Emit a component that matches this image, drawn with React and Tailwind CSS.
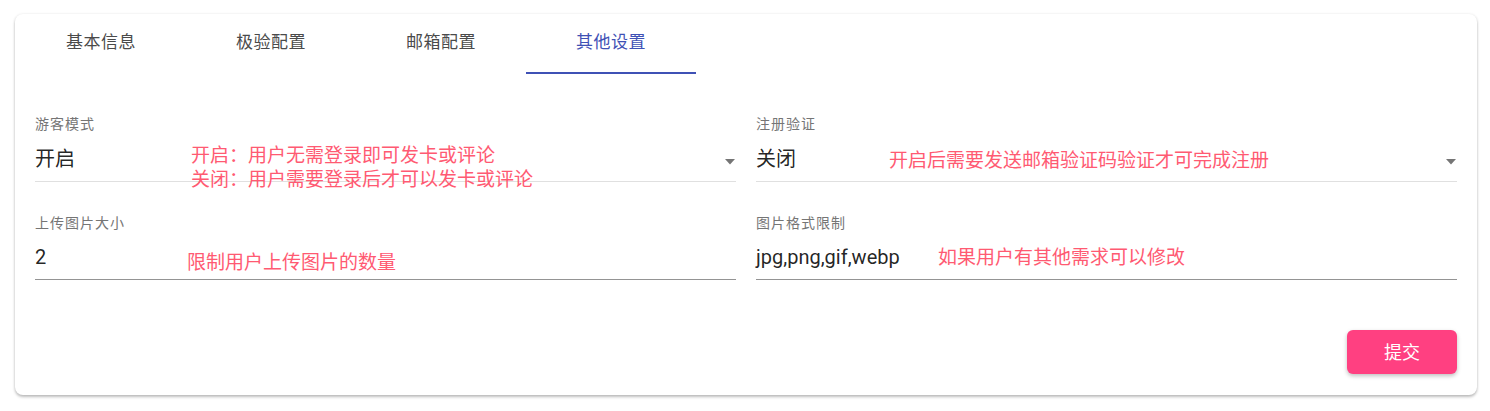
import React, { useState } from 'react'

const TABS = ['基本信息', '极验配置', '邮箱配置', '其他设置']

const FONT = { fontFamily: 'Roboto, "Noto Sans CJK SC", sans-serif' }

function Caret() {
  return (
    <svg className="absolute right-px top-[28px]" width="10" height="6" viewBox="0 0 10 6">
      <polygon points="0,0 10,0 5,5.5" fill="#757575" />
    </svg>
  )
}

function Field({ label, value, select, hint, hintTop, hintLeft, rowPt, line }) {
  return (
    <div className="flex flex-col">
      <p className="text-[14px] leading-[14px] tracking-[1px] text-[#757575]">{label}</p>
      <div
        className={`relative pb-[10px] border-b ${line}`}
        style={{ paddingTop: rowPt }}
      >
        <p className="text-[20px] leading-[24px] text-[#000000de]">{value}</p>
        {select && <Caret />}
        <div
          className="absolute text-[19px] leading-[24px] text-[#ff5a72] whitespace-nowrap"
          style={{ top: hintTop, left: hintLeft }}
        >
          {hint.map((h) => (
            <p key={h}>{h}</p>
          ))}
        </div>
      </div>
    </div>
  )
}

export default function App() {
  const [tab, setTab] = useState(3)

  return (
    <div className="min-h-[411px] bg-white pt-[14px] pl-[15px]" style={FONT}>
      <div className="w-[1462px] h-[381px] rounded-lg bg-white shadow-[0_2px_3px_rgba(0,0,0,0.25),0_0_3px_rgba(0,0,0,0.08)] flex flex-col">
        {/* Tabs */}
        <div className="flex h-[60px] pl-px">
          {TABS.map((t, i) => (
            <button
              key={t}
              onClick={() => setTab(i)}
              className={`w-[170px] h-full flex items-center justify-center text-[17px] tracking-[0.5px] border-b-2 ${
                i === tab ? 'text-[#3f51b5] border-[#3f51b5]' : 'text-[#4a4a4a] border-transparent'
              }`}
            >
              {t}
            </button>
          ))}
        </div>

        {/* Form */}
        <div className="px-[20px] pt-[43px] grid grid-cols-2 gap-x-[20px]">
          <Field
            label="游客模式"
            value="开启"
            select
            rowPt="16px"
            line="border-[#e0e0e0]"
            hint={['开启：用户无需登录即可发卡或评论', '关闭：用户需要登录后才可以发卡或评论']}
            hintTop="13px"
            hintLeft="156px"
          />
          <Field
            label="注册验证"
            value="关闭"
            select
            rowPt="16px"
            line="border-[#e0e0e0]"
            hint={['开启后需要发送邮箱验证码验证才可完成注册']}
            hintTop="18px"
            hintLeft="133px"
          />
        </div>
        <div className="px-[20px] pt-[34px] grid grid-cols-2 gap-x-[20px]">
          <Field
            label="上传图片大小"
            value="2"
            rowPt="15px"
            line="border-[#949494]"
            hint={['限制用户上传图片的数量']}
            hintTop="21px"
            hintLeft="152px"
          />
          <Field
            label="图片格式限制"
            value="jpg,png,gif,webp"
            rowPt="15px"
            line="border-[#949494]"
            hint={['如果用户有其他需求可以修改']}
            hintTop="16px"
            hintLeft="182px"
          />
        </div>

        <div className="flex justify-end px-[20px] mt-[50px]">
          <button className="w-[110px] h-[44px] rounded-md bg-[#ff4081] text-white text-[18px] shadow-[0_2px_4px_rgba(0,0,0,0.25)]">
            提交
          </button>
        </div>
      </div>
    </div>
  )
}
